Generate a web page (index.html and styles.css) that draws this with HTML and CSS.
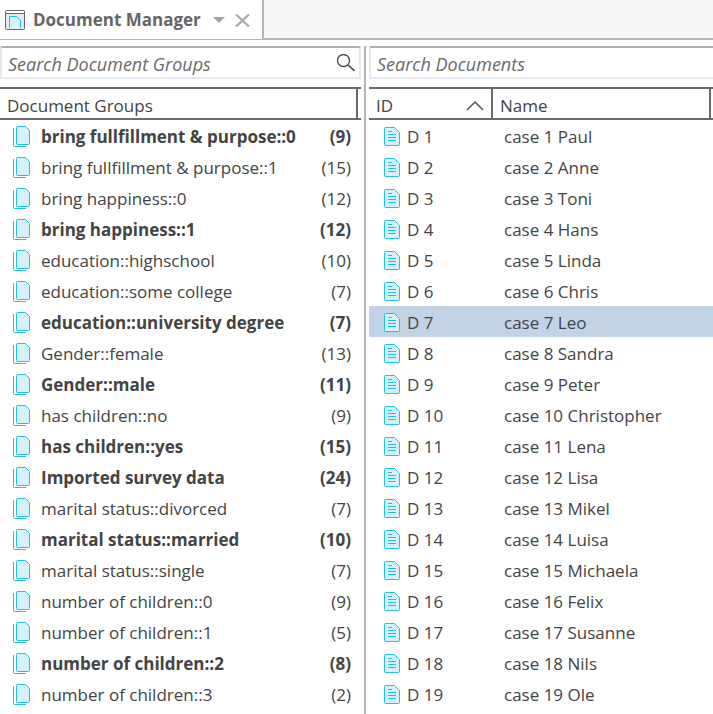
FILE: index.html
```html
<!DOCTYPE html>
<html lang="en">
<head>
<meta charset="utf-8">
<meta name="viewport" content="width=device-width, initial-scale=1">
<title>Document Manager</title>
<link rel="stylesheet" href="styles.css">
</head>
<body>
<svg class="symbols" aria-hidden="true">
  <symbol id="group" viewBox="0 0 18 22">
    <path d="M.5 2v17.500q0 1 1 1H13" fill="none" stroke="#1fbfe6"/>
    <path d="M4.500.500h8l4 4v13q0 1-1 1h-11q-1 0-1-1v-16q0-1 1-1z" fill="#d5f2fa" stroke="#1fbfe6"/>
  </symbol>
  <symbol id="doc" viewBox="0 0 16 19">
    <path d="M1.500.500h9l5 5v12q0 1-1 1h-13q-1 0-1-1v-16q0-1 1-1z" fill="#d5f2fa" stroke="#1fbfe6"/>
    <path d="M4 4.500h4M4 7.500h8M4 10.500h8M4 13.500h8" fill="none" stroke="#1fbfe6"/>
  </symbol>
</svg>
<header class="tabs">
  <div class="tab">
    <svg class="tab-icon" viewBox="0 0 20 20" aria-hidden="true">
      <rect x=".5" y=".5" width="19" height="19" rx="1" fill="#e6ebf1" stroke="#666"/>
      <path d="M1 1h18v2H1z" fill="#fff"/>
      <path d="M0 3.500h20" stroke="#666"/>
      <path d="M4.500 18V6.500h7l4 4V18z" fill="#d5f2fa"/>
      <path d="M4.500 18V6.500h7l4 4V18" fill="none" stroke="#1fbfe6"/>
    </svg>
    <h1>Document Manager</h1>
    <button class="menu" aria-label="Tab menu"><svg width="12" height="6" viewBox="0 0 12 6"><path d="M0 0h12L6 6z" fill="#a3a1a5"/></svg></button>
    <button class="close" aria-label="Close tab"><svg width="15" height="13" viewBox="0 0 15 13"><path d="M1 .5l13 12M14 .5l-13 12" stroke="#a6aaa8" stroke-width="2.200"/></svg></button>
  </div>
  <div class="tabs-rest"></div>
</header>
<main class="panes">
  <section class="pane groups">
    <div class="search">
      <input type="text" placeholder="Search Document Groups" aria-label="Search Document Groups">
      <button aria-label="Search"><svg width="18" height="18" viewBox="0 0 18 18"><circle cx="6.500" cy="6.500" r="6" fill="none" stroke="#4b4548" stroke-width="1.300"/><path d="M11 11l6.500 6" stroke="#4b4548" stroke-width="1.600"/></svg></button>
    </div>
    <table>
      <thead><tr><th colspan="2"><span class="head">Document Groups</span></th></tr></thead>
      <tbody>
        <tr class="strong"><td><svg><use href="#group"/></svg>bring fullfillment &amp; purpose::0</td><td>(9)</td></tr>
        <tr><td><svg><use href="#group"/></svg>bring fullfillment &amp; purpose::1</td><td>(15)</td></tr>
        <tr><td><svg><use href="#group"/></svg>bring happiness::0</td><td>(12)</td></tr>
        <tr class="strong"><td><svg><use href="#group"/></svg>bring happiness::1</td><td>(12)</td></tr>
        <tr><td><svg><use href="#group"/></svg>education::highschool</td><td>(10)</td></tr>
        <tr><td><svg><use href="#group"/></svg>education::some college</td><td>(7)</td></tr>
        <tr class="strong"><td><svg><use href="#group"/></svg>education::university degree</td><td>(7)</td></tr>
        <tr><td><svg><use href="#group"/></svg>Gender::female</td><td>(13)</td></tr>
        <tr class="strong"><td><svg><use href="#group"/></svg>Gender::male</td><td>(11)</td></tr>
        <tr><td><svg><use href="#group"/></svg>has children::no</td><td>(9)</td></tr>
        <tr class="strong"><td><svg><use href="#group"/></svg>has children::yes</td><td>(15)</td></tr>
        <tr class="strong"><td><svg><use href="#group"/></svg>Imported survey data</td><td>(24)</td></tr>
        <tr><td><svg><use href="#group"/></svg>marital status::divorced</td><td>(7)</td></tr>
        <tr class="strong"><td><svg><use href="#group"/></svg>marital status::married</td><td>(10)</td></tr>
        <tr><td><svg><use href="#group"/></svg>marital status::single</td><td>(7)</td></tr>
        <tr><td><svg><use href="#group"/></svg>number of children::0</td><td>(9)</td></tr>
        <tr><td><svg><use href="#group"/></svg>number of children::1</td><td>(5)</td></tr>
        <tr class="strong"><td><svg><use href="#group"/></svg>number of children::2</td><td>(8)</td></tr>
        <tr><td><svg><use href="#group"/></svg>number of children::3</td><td>(2)</td></tr>
      </tbody>
    </table>
  </section>
  <section class="pane documents">
    <div class="search">
      <input type="text" placeholder="Search Documents" aria-label="Search Documents">
    </div>
    <table>
      <thead><tr>
        <th class="id" aria-sort="ascending"><span class="head">ID <svg width="18" height="10" viewBox="0 0 18 10" aria-hidden="true"><path d="M1 9l8-8 8 8" fill="none" stroke="#5f4c57" stroke-width="1.500"/></svg></span></th>
        <th><span class="head">Name</span></th>
      </tr></thead>
      <tbody>
        <tr><td><svg><use href="#doc"/></svg>D 1</td><td>case 1 Paul</td></tr>
        <tr><td><svg><use href="#doc"/></svg>D 2</td><td>case 2 Anne</td></tr>
        <tr><td><svg><use href="#doc"/></svg>D 3</td><td>case 3 Toni</td></tr>
        <tr><td><svg><use href="#doc"/></svg>D 4</td><td>case 4 Hans</td></tr>
        <tr><td><svg><use href="#doc"/></svg>D 5</td><td>case 5 Linda</td></tr>
        <tr><td><svg><use href="#doc"/></svg>D 6</td><td>case 6 Chris</td></tr>
        <tr class="selected"><td><svg><use href="#doc"/></svg>D 7</td><td>case 7 Leo</td></tr>
        <tr><td><svg><use href="#doc"/></svg>D 8</td><td>case 8 Sandra</td></tr>
        <tr><td><svg><use href="#doc"/></svg>D 9</td><td>case 9 Peter</td></tr>
        <tr><td><svg><use href="#doc"/></svg>D 10</td><td>case 10 Christopher</td></tr>
        <tr><td><svg><use href="#doc"/></svg>D 11</td><td>case 11 Lena</td></tr>
        <tr><td><svg><use href="#doc"/></svg>D 12</td><td>case 12 Lisa</td></tr>
        <tr><td><svg><use href="#doc"/></svg>D 13</td><td>case 13 Mikel</td></tr>
        <tr><td><svg><use href="#doc"/></svg>D 14</td><td>case 14 Luisa</td></tr>
        <tr><td><svg><use href="#doc"/></svg>D 15</td><td>case 15 Michaela</td></tr>
        <tr><td><svg><use href="#doc"/></svg>D 16</td><td>case 16 Felix</td></tr>
        <tr><td><svg><use href="#doc"/></svg>D 17</td><td>case 17 Susanne</td></tr>
        <tr><td><svg><use href="#doc"/></svg>D 18</td><td>case 18 Nils</td></tr>
        <tr><td><svg><use href="#doc"/></svg>D 19</td><td>case 19 Ole</td></tr>
      </tbody>
    </table>
  </section>
</main>
</body>
</html>
```
FILE: styles.css
```css
* {
  box-sizing: border-box;
}

body {
  margin: 0;
  min-height: 100vh;
  display: flex;
  flex-direction: column;
  background: #fff;
  color: #444;
  font: 17px/24px "Open Sans", "Noto Sans", sans-serif;
}

.symbols {
  display: none;
}

button {
  display: flex;
  padding: 0;
  border: 0;
  background: none;
}

.tabs {
  display: flex;
  height: 40px;
}

.tab {
  display: flex;
  align-items: center;
  padding: 1px 12px 0 5px;
  border-right: 2px solid #b5b5b6;
  border-bottom: 1px solid #b5b5b6;
}

.tab-icon {
  width: 20px;
  height: 20px;
  margin-right: 8px;
}

.tab h1 {
  margin: 0;
  color: #666;
  font-size: 17px;
  font-weight: 700;
}

.menu {
  margin-left: 12px;
}

.close {
  margin-left: 10px;
}

.tabs-rest {
  flex: 1;
  border-bottom: 2px solid #b5b5b6;
  background: #f8f8f8;
}

.panes {
  flex: 1;
  display: grid;
  grid-template-columns: 366fr 347fr;
  margin-top: 6px;
}

.groups {
  padding-right: 3px;
  border-right: 2px solid #b5b5b6;
}

.documents {
  padding-left: 3px;
}

.search {
  display: flex;
  align-items: center;
  height: 33px;
  margin-bottom: 8px;
  padding: 0 4px 0 6px;
  border: 2px solid #e6eaf0;
  border-top-color: #b0adb3;
}

.documents .search {
  border-right: 0;
}

.search input {
  flex: 1;
  min-width: 0;
  padding: 2px 0 0;
  border: 0;
  outline: 0;
  background: none;
  font: inherit;
  font-size: 18px;
  font-style: italic;
}

.search input::placeholder {
  color: #6b6b6b;
  opacity: 1;
}

table {
  width: 100%;
  border-spacing: 0;
  table-layout: fixed;
}

th {
  height: 33px;
  padding: 0;
  border: solid #6b6b6b;
  border-width: 2px 0;
  font-weight: 400;
  text-align: left;
}

.head {
  display: flex;
  align-items: center;
  justify-content: space-between;
  height: 29px;
  margin-right: 3px;
  padding: 4px 7px 0;
  border-right: 2px solid #6b6b6b;
}

.documents .head {
  margin-right: 2px;
}

.documents .id .head {
  margin-right: 0;
}

.id {
  width: 124px;
}

td {
  height: 31px;
  padding: 5px 0 2px;
  white-space: nowrap;
}

td svg {
  display: inline-block;
  vertical-align: middle;
}

.groups td:first-child {
  width: 310px;
  padding-left: 13px;
}

.groups td:last-child {
  padding-right: 10px;
  text-align: right;
}

.groups td svg {
  width: 18px;
  height: 22px;
  margin: -2px 10px 0 0;
}

.documents td:first-child {
  padding-left: 15px;
}

.documents td:last-child {
  padding-left: 11px;
}

.documents td svg {
  width: 16px;
  height: 19px;
  margin: -3px 7px 0 0;
}

.strong {
  font-weight: 700;
}

.selected {
  background: #c3d3e6;
}
```
